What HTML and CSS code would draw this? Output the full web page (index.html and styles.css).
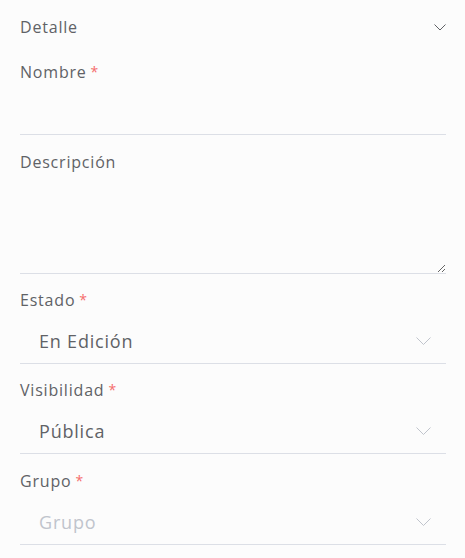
FILE: index.html
```html
<!DOCTYPE html>
<html lang="es">
<head>
<meta charset="UTF-8">
<meta name="viewport" content="width=device-width, initial-scale=1.0">
<title>Detalle</title>
<link rel="stylesheet" href="styles.css">
</head>
<body>
  <div class="panel">
    <div class="panel-header">
      <span>Detalle</span>
      <svg class="arrow-small" width="12" height="7" viewBox="0 0 12 7"><path d="M0.5 0.5 L6 6 L11.5 0.5" fill="none" stroke="#606266" stroke-width="1"/></svg>
    </div>

    <div class="field first">
      <label class="field-label required">Nombre</label>
      <input class="field-input" type="text">
    </div>

    <div class="field wide-gap">
      <label class="field-label">Descripción</label>
      <textarea class="field-textarea"></textarea>
    </div>

    <div class="field">
      <label class="field-label required">Estado</label>
      <div class="select">
        <span class="select-value">En Edición</span>
        <svg class="arrow" width="15" height="8" viewBox="0 0 15 8"><path d="M0.5 0.5 L7.5 7.5 L14.5 0.5" fill="none" stroke="#c0c4cc" stroke-width="1"/></svg>
      </div>
    </div>

    <div class="field">
      <label class="field-label required">Visibilidad</label>
      <div class="select">
        <span class="select-value">Pública</span>
        <svg class="arrow" width="15" height="8" viewBox="0 0 15 8"><path d="M0.5 0.5 L7.5 7.5 L14.5 0.5" fill="none" stroke="#c0c4cc" stroke-width="1"/></svg>
      </div>
    </div>

    <div class="field wide-gap">
      <label class="field-label required">Grupo</label>
      <div class="select">
        <span class="select-value placeholder">Grupo</span>
        <svg class="arrow" width="15" height="8" viewBox="0 0 15 8"><path d="M0.5 0.5 L7.5 7.5 L14.5 0.5" fill="none" stroke="#c0c4cc" stroke-width="1"/></svg>
      </div>
    </div>
  </div>
</body>
</html>
```

FILE: styles.css
```css
body {
  margin: 0;
  background-color: #fcfcfc;
  font-family: "Open Sans", Arial, sans-serif;
  color: #606266;
  letter-spacing: 0.8px;
}

.panel {
  display: flex;
  flex-direction: column;
  padding: 0 19px 0 20px;
}

.panel-header {
  height: 54px;
  display: flex;
  align-items: center;
  justify-content: space-between;
  font-size: 16px;
}

.field {
  display: flex;
  flex-direction: column;
  margin-top: 16px;
}

.field.first {
  margin-top: 8px;
}

.field.wide-gap {
  margin-top: 17px;
}

.field-label {
  font-size: 16px;
  line-height: 20px;
  height: 20px;
}

.required::after {
  content: "*";
  color: #f56c6c;
  margin-left: 4px;
  font-size: 14px;
  vertical-align: top;
}

.field-input {
  height: 53px;
  border: none;
  border-bottom: 1px solid #dcdfe6;
  background: transparent;
  box-sizing: border-box;
  padding: 0;
  outline: none;
}

.field-textarea {
  height: 102px;
  border: none;
  border-bottom: 1px solid #dcdfe6;
  background: transparent;
  box-sizing: border-box;
  padding: 0;
  margin: 0;
  display: block;
  outline: none;
  font-family: inherit;
}

.select {
  display: flex;
  align-items: center;
  justify-content: space-between;
  padding: 20px 15px 11px 19px;
  border-bottom: 1px solid #dcdfe6;
}

.select-value {
  font-size: 18px;
  line-height: 22px;
}

.select-value.placeholder {
  color: #c0c4cc;
}

.arrow {
  display: block;
}
```
